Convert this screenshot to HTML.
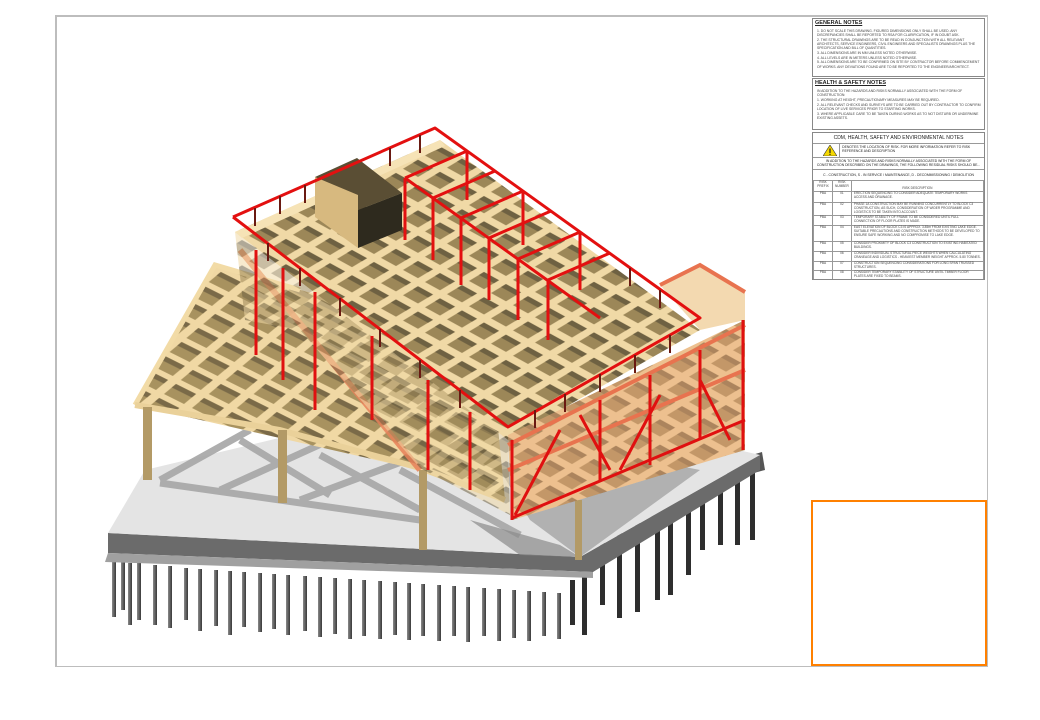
<!DOCTYPE html>
<html><head><meta charset="utf-8"><style>
html,body{margin:0;padding:0;background:#fff;}
body{width:1040px;height:720px;position:relative;overflow:hidden;font-family:"Liberation Sans",sans-serif;}
.frame{position:absolute;left:55px;top:15px;width:930px;height:649px;border:1px solid #bdbdbd;border-width:2px 1px 1px 2px;}
.orange{position:absolute;left:811px;top:500px;width:172px;height:162px;border:2px solid #ff8000;}
.box{position:absolute;left:812px;width:171px;border:1px solid #888;background:#fff;font-size:3.4px;line-height:4.2px;color:#444;overflow:hidden;}
.box h4{margin:1px 2px 2px;font-size:5.5px;line-height:7px;text-decoration:underline;color:#222;}
.box p{margin:0 3px 0.5px 4px;}
table{border-collapse:collapse;width:100%;font-size:3.2px;line-height:3.9px;color:#444;}
td{border:1px solid #999;padding:0 2px;vertical-align:top;}
</style></head><body>
<div class="frame"></div>

<div class="box" style="top:18px;height:57px;">
<h4>GENERAL NOTES</h4>
<p>1. DO NOT SCALE THIS DRAWING. FIGURED DIMENSIONS ONLY SHALL BE USED. ANY DISCREPANCIES SHALL BE REPORTED TO RSA FOR CLARIFICATION, IF IN DOUBT ASK.</p>
<p>2. THE STRUCTURAL DRAWINGS ARE TO BE READ IN CONJUNCTION WITH ALL RELEVANT ARCHITECTS, SERVICE ENGINEERS, CIVIL ENGINEERS AND SPECIALISTS DRAWINGS PLUS THE SPECIFICATION AND BILL OF QUANTITIES.</p>
<p>3. ALL DIMENSIONS ARE IN MM UNLESS NOTED OTHERWISE.</p>
<p>4. ALL LEVELS ARE IN METERS UNLESS NOTED OTHERWISE.</p>
<p>5. ALL DIMENSIONS ARE TO BE CONFIRMED ON SITE BY CONTRACTOR BEFORE COMMENCEMENT OF WORKS. ANY DEVIATIONS FOUND ARE TO BE REPORTED TO THE ENGINEER/ARCHITECT.</p>
</div>
<div class="box" style="top:78px;height:50px;">
<h4>HEALTH &amp; SAFETY NOTES</h4>
<p>IN ADDITION TO THE HAZARDS AND RISKS NORMALLY ASSOCIATED WITH THE FORM OF CONSTRUCTION:</p>
<p>1. WORKING AT HEIGHT, PRECAUTIONARY MEASURES MAY BE REQUIRED.</p>
<p>2. ALL RELEVANT CHECKS AND SURVEYS ARE TO BE CARRIED OUT BY CONTRACTOR TO CONFIRM LOCATION OF LIVE SERVICES PRIOR TO STARTING WORKS.</p>
<p>3. WHERE APPLICABLE CARE TO BE TAKEN DURING WORKS AS TO NOT DISTURB OR UNDERMINE EXISTING ASSETS.</p>
</div>
<div class="box" style="top:132px;height:146px;">
<div style="text-align:center;font-size:5px;line-height:10px;border-bottom:1px solid #999;color:#222;">CDM, HEALTH, SAFETY AND ENVIRONMENTAL NOTES</div>
<div style="display:flex;border-bottom:1px solid #999;height:13px;">
<div style="width:34px;border-right:1px solid #999;position:relative;"><svg width="14" height="11" style="position:absolute;left:10px;top:1px"><polygon points="7,0 14,11 0,11" fill="#f5d800" stroke="#333" stroke-width=".6"/><rect x="6.4" y="3.5" width="1.2" height="4.5" fill="#222"/><rect x="6.4" y="8.8" width="1.2" height="1.2" fill="#222"/></svg></div>
<div style="font-size:3.4px;line-height:4.4px;padding:1px 2px;color:#222;">DENOTES THE LOCATION OF RISK. FOR MORE INFORMATION REFER TO RISK REFERENCE AND DESCRIPTION</div></div>
<div style="text-align:center;font-size:3.4px;line-height:4.4px;border-bottom:1px solid #999;padding:1px 0;color:#222;">IN ADDITION TO THE HAZARDS AND RISKS NORMALLY ASSOCIATED WITH THE FORM OF CONSTRUCTION DESCRIBED ON THE DRAWINGS, THE FOLLOWING RESIDUAL RISKS SHOULD BE...</div>
<div style="text-align:center;font-size:3.4px;line-height:10px;color:#222;">C - CONSTRUCTION, S - IN SERVICE / MAINTENANCE, D - DECOMMISSIONING / DEMOLITION</div>
<table>
<tr style="height:11px"><td style="width:14px;text-align:center">RISK PREFIX</td><td style="width:12px;text-align:center">RISK NUMBER</td><td style="text-align:center;vertical-align:bottom">RISK DESCRIPTION</td></tr>
<tr style="height:11px"><td style="text-align:center">PBA</td><td style="text-align:center">01</td><td>ERECTION SEQUENCING TO CONSIDER ADEQUATE TEMPORARY WORKS ACCESS AND DRAINAGE.</td></tr>
<tr style="height:13px"><td style="text-align:center">PBA</td><td style="text-align:center">02</td><td>PHASE 1A CONSTRUCTION MAY BE RUNNING CONCURRENTLY TO BLOCK C3 CONSTRUCTION, AS SUCH, CONSIDERATION OF WIDER PROGRAMME AND LOGISTICS TO BE TAKEN INTO ACCOUNT.</td></tr>
<tr style="height:10px"><td style="text-align:center">PBA</td><td style="text-align:center">03</td><td>TEMPORARY STABILITY OF FRAME TO BE CONSIDERED UNTIL FULL CONNECTION OF FLOOR PLATES IS MADE.</td></tr>
<tr style="height:16px"><td style="text-align:center">PBA</td><td style="text-align:center">04</td><td>EAST ELEVATION OF BLOCK C3 IS APPROX. 3.85m FROM EXISTING LAKE EDGE. SUITABLE PRECAUTIONS AND CONSTRUCTION METHODS TO BE DEVELOPED TO ENSURE SAFE WORKING AND NO COMPROMISE TO LAKE EDGE.</td></tr>
<tr style="height:10px"><td style="text-align:center">PBA</td><td style="text-align:center">05</td><td>CONSIDER PROXIMITY OF BLOCK C3 CONSTRUCTION TO EXISTING HABITATED BUILDINGS.</td></tr>
<tr style="height:10px"><td style="text-align:center">PBA</td><td style="text-align:center">06</td><td>CONSIDER INDIVIDUAL STRUCTURAL PIECE WEIGHTS WHEN CALCULATING CRANEAGE AND LOGISTICS - HEAVIEST MEMBER WEIGHT APPROX. 5.80 TONNES.</td></tr>
<tr style="height:9px"><td style="text-align:center">PBA</td><td style="text-align:center">07</td><td>CONSTRUCTION SEQUENCING CONSIDERATIONS FOR LONG SPAN TRUSSED STRUCTURES.</td></tr>
<tr style="height:9px"><td style="text-align:center">PBA</td><td style="text-align:center">08</td><td>CONSIDER TEMPORARY STABILITY OF STRUCTURE UNTIL TIMBER FLOOR PLATES ARE FIXED TO BEAMS.</td></tr>
</table>
</div>

<svg width="1040" height="720" style="position:absolute;left:0;top:0">
<defs>
<pattern id="grid" width="22" height="22" patternUnits="userSpaceOnUse" patternTransform="matrix(1,0.55,-1,0.6,0,0)">
<rect width="22" height="22" fill="#f0d9a6"/>
<rect x="5" y="5" width="15" height="15" fill="#9c8758"/>
<rect x="5" y="5" width="15" height="5" fill="#6e6142"/>
</pattern>
<pattern id="grid2" width="28" height="28" patternUnits="userSpaceOnUse" patternTransform="matrix(1,0.5,-0.6,0.5,0,0)">
<rect width="28" height="28" fill="#f0d8a4"/>
<rect x="6" y="6" width="20" height="20" fill="#a8925f"/>
<rect x="6" y="6" width="20" height="7" fill="#7a6a48"/>
</pattern>
<linearGradient id="pile" x1="0" x2="1"><stop offset="0" stop-color="#8a8a8a"/><stop offset="1" stop-color="#3a3a3a"/></linearGradient>
</defs>

<!-- piles right -->
<g fill="#2e2e2e">
<rect x="600" y="530" width="5" height="75"/><rect x="617" y="528" width="5" height="90"/><rect x="635" y="520" width="5" height="92"/><rect x="655" y="505" width="5" height="95"/><rect x="668" y="515" width="5" height="80"/><rect x="686" y="505" width="5" height="70"/><rect x="700" y="500" width="5" height="50"/><rect x="718" y="490" width="5" height="55"/><rect x="735" y="470" width="5" height="75"/><rect x="750" y="468" width="5" height="72"/><rect x="582" y="575" width="5" height="60"/><rect x="570" y="580" width="5" height="45"/>
</g>
<polygon points="640,512 680,500 690,505 652,518" fill="#999"/>
<polygon points="725,463 762,452 765,470 728,480" fill="#555"/>
<!-- piles front -->
<g fill="url(#pile)">
<rect x="112" y="562" width="4" height="55"/><rect x="121" y="562" width="4" height="48"/><rect x="128" y="563" width="4" height="62"/><rect x="137" y="563" width="4" height="57"/><rect x="153" y="565" width="4" height="60"/><rect x="168" y="566" width="4" height="62"/><rect x="184" y="568" width="4" height="52"/><rect x="198" y="569" width="4" height="62"/><rect x="214" y="570" width="4" height="56"/><rect x="228" y="571" width="4" height="64"/><rect x="242" y="572" width="4" height="55"/><rect x="258" y="573" width="4" height="59"/><rect x="272" y="574" width="4" height="55"/><rect x="286" y="575" width="4" height="60"/><rect x="303" y="576" width="4" height="55"/><rect x="318" y="577" width="4" height="60"/><rect x="333" y="578" width="4" height="56"/><rect x="348" y="579" width="4" height="60"/><rect x="362" y="580" width="4" height="56"/><rect x="378" y="581" width="4" height="58"/><rect x="393" y="582" width="4" height="53"/><rect x="407" y="583" width="4" height="57"/><rect x="421" y="584" width="4" height="52"/><rect x="437" y="585" width="4" height="56"/><rect x="452" y="586" width="4" height="50"/><rect x="466" y="587" width="4" height="55"/><rect x="482" y="588" width="4" height="48"/><rect x="497" y="589" width="4" height="52"/><rect x="512" y="590" width="4" height="48"/><rect x="527" y="591" width="4" height="50"/><rect x="542" y="592" width="4" height="44"/><rect x="557" y="593" width="4" height="46"/>
</g>
<!-- slab -->
<polygon points="108,533 580,557 760,455 760,470 593,572 108,553" fill="#6b6b6b"/>
<polygon points="108,553 593,572 593,578 105,562" fill="#a0a0a0"/>
<polygon points="108,533 145,470 480,390 760,455 580,557" fill="#e4e4e4"/>
<g stroke="#a6a6a6" stroke-width="7" fill="none" opacity=".9">
<line x1="160" y1="480" x2="250" y2="430"/><line x1="220" y1="490" x2="330" y2="440"/><line x1="300" y1="500" x2="420" y2="455"/>
<line x1="240" y1="440" x2="330" y2="495"/><line x1="320" y1="455" x2="420" y2="510"/><line x1="400" y1="470" x2="520" y2="535"/>
<line x1="160" y1="483" x2="420" y2="520"/>
</g>
<polygon points="500,470 600,450 700,470 580,557 530,520" fill="#a4a4a4" opacity=".8"/>
<polygon points="470,520 560,545 580,557 520,555" fill="#8a8a8a" opacity=".7"/>

<!-- left timber wing -->
<polygon points="135,405 215,265 490,345 505,500 420,470" fill="url(#grid2)"/>
<polyline points="135,405 215,265 300,290" stroke="#f2dba6" stroke-width="5" fill="none"/>
<polyline points="135,405 280,430 420,468 505,500" stroke="#ead19a" stroke-width="6" fill="none"/>
<line x1="240" y1="250" x2="420" y2="470" stroke="#e8825a" stroke-width="6" opacity=".85"/>
<g fill="#b39a66"><rect x="143" y="407" width="9" height="73"/><rect x="278" y="430" width="9" height="73"/><rect x="419" y="470" width="8" height="80"/><rect x="575" y="500" width="7" height="60"/></g>

<!-- upper block left face -->
<polygon points="235,232 508,440 510,515 420,468 300,330 245,320" fill="url(#grid)" opacity=".55"/>
<!-- upper floor -->
<polygon points="235,232 440,140 700,330 508,440" fill="url(#grid)"/>
<polygon points="235,232 440,140 445,146 242,238" fill="#f6e3b6"/>
<!-- front face -->
<polygon points="508,435 745,320 745,450 512,520" fill="url(#grid)"/>
<polygon points="508,435 745,320 745,450 512,520" fill="#eaa878" opacity=".5"/>
<polygon points="660,285 700,265 745,292 745,320 700,330" fill="#f3d9b0"/>
<g stroke="#e8734f" stroke-width="4" fill="none">
<line x1="508" y1="470" x2="745" y2="370"/>
<line x1="508" y1="445" x2="745" y2="325"/>
<polyline points="660,285 700,265 745,292"/>
</g>
<g stroke="#e01010" stroke-width="3" fill="none">
<line x1="512" y1="440" x2="512" y2="520"/><line x1="600" y1="400" x2="600" y2="482"/><line x1="650" y1="375" x2="650" y2="465"/><line x1="700" y1="350" x2="700" y2="440"/><line x1="743" y1="320" x2="743" y2="450"/>
<line x1="515" y1="515" x2="560" y2="430"/><line x1="580" y1="415" x2="610" y2="470"/><line x1="620" y1="470" x2="660" y2="395"/><line x1="700" y1="380" x2="730" y2="440"/>
<line x1="512" y1="518" x2="745" y2="420"/>
<line x1="256" y1="250" x2="256" y2="355"/><line x1="283" y1="268" x2="283" y2="380"/><line x1="315" y1="292" x2="315" y2="410"/><line x1="372" y1="336" x2="372" y2="420"/><line x1="428" y1="380" x2="428" y2="470"/><line x1="470" y1="412" x2="470" y2="490"/>
</g>
<!-- core box -->
<polygon points="315,177 357,158 402,193 358,210" fill="#5a4e34"/>
<polygon points="315,177 358,195 358,248 315,217" fill="#d7b97f"/>
<polygon points="358,210 402,193 402,230 358,248" fill="#2e2a1e"/>
<g stroke="#e31010" stroke-width="3" fill="none" stroke-linejoin="round">
<polyline points="233,217 435,128 700,318 508,427 233,217"/>
<line x1="405" y1="178" x2="600" y2="318"/>
<line x1="467" y1="151" x2="405" y2="178"/>
<line x1="495" y1="171" x2="433" y2="198"/>
<line x1="523" y1="191" x2="461" y2="218"/>
<line x1="551" y1="211" x2="489" y2="238"/>
<line x1="580" y1="232" x2="518" y2="259"/>
<line x1="610" y1="253" x2="548" y2="280"/>
<line x1="405" y1="178" x2="405" y2="240"/><line x1="433" y1="198" x2="433" y2="260"/><line x1="461" y1="218" x2="461" y2="285"/><line x1="489" y1="238" x2="489" y2="300"/><line x1="518" y1="259" x2="518" y2="320"/><line x1="548" y1="280" x2="548" y2="340"/>
<line x1="467" y1="151" x2="467" y2="200"/><line x1="523" y1="191" x2="523" y2="245"/><line x1="580" y1="232" x2="580" y2="290"/>
</g>
<g stroke="#6a1a12" stroke-width="2">
<line x1="255" y1="208" x2="255" y2="226"/><line x1="280" y1="196" x2="280" y2="214"/><line x1="305" y1="185" x2="305" y2="203"/><line x1="390" y1="148" x2="390" y2="166"/><line x1="420" y1="135" x2="420" y2="153"/>
<line x1="630" y1="268" x2="630" y2="286"/><line x1="660" y1="290" x2="660" y2="308"/>
<line x1="535" y1="410" x2="535" y2="428"/><line x1="565" y1="394" x2="565" y2="412"/><line x1="600" y1="374" x2="600" y2="392"/><line x1="635" y1="355" x2="635" y2="373"/><line x1="670" y1="335" x2="670" y2="353"/>
<line x1="268" y1="243" x2="268" y2="261"/><line x1="300" y1="268" x2="300" y2="286"/><line x1="340" y1="298" x2="340" y2="316"/><line x1="380" y1="329" x2="380" y2="347"/><line x1="420" y1="360" x2="420" y2="378"/><line x1="460" y1="390" x2="460" y2="408"/>
</g>
</svg>
<div class="orange"></div>
</body></html>
